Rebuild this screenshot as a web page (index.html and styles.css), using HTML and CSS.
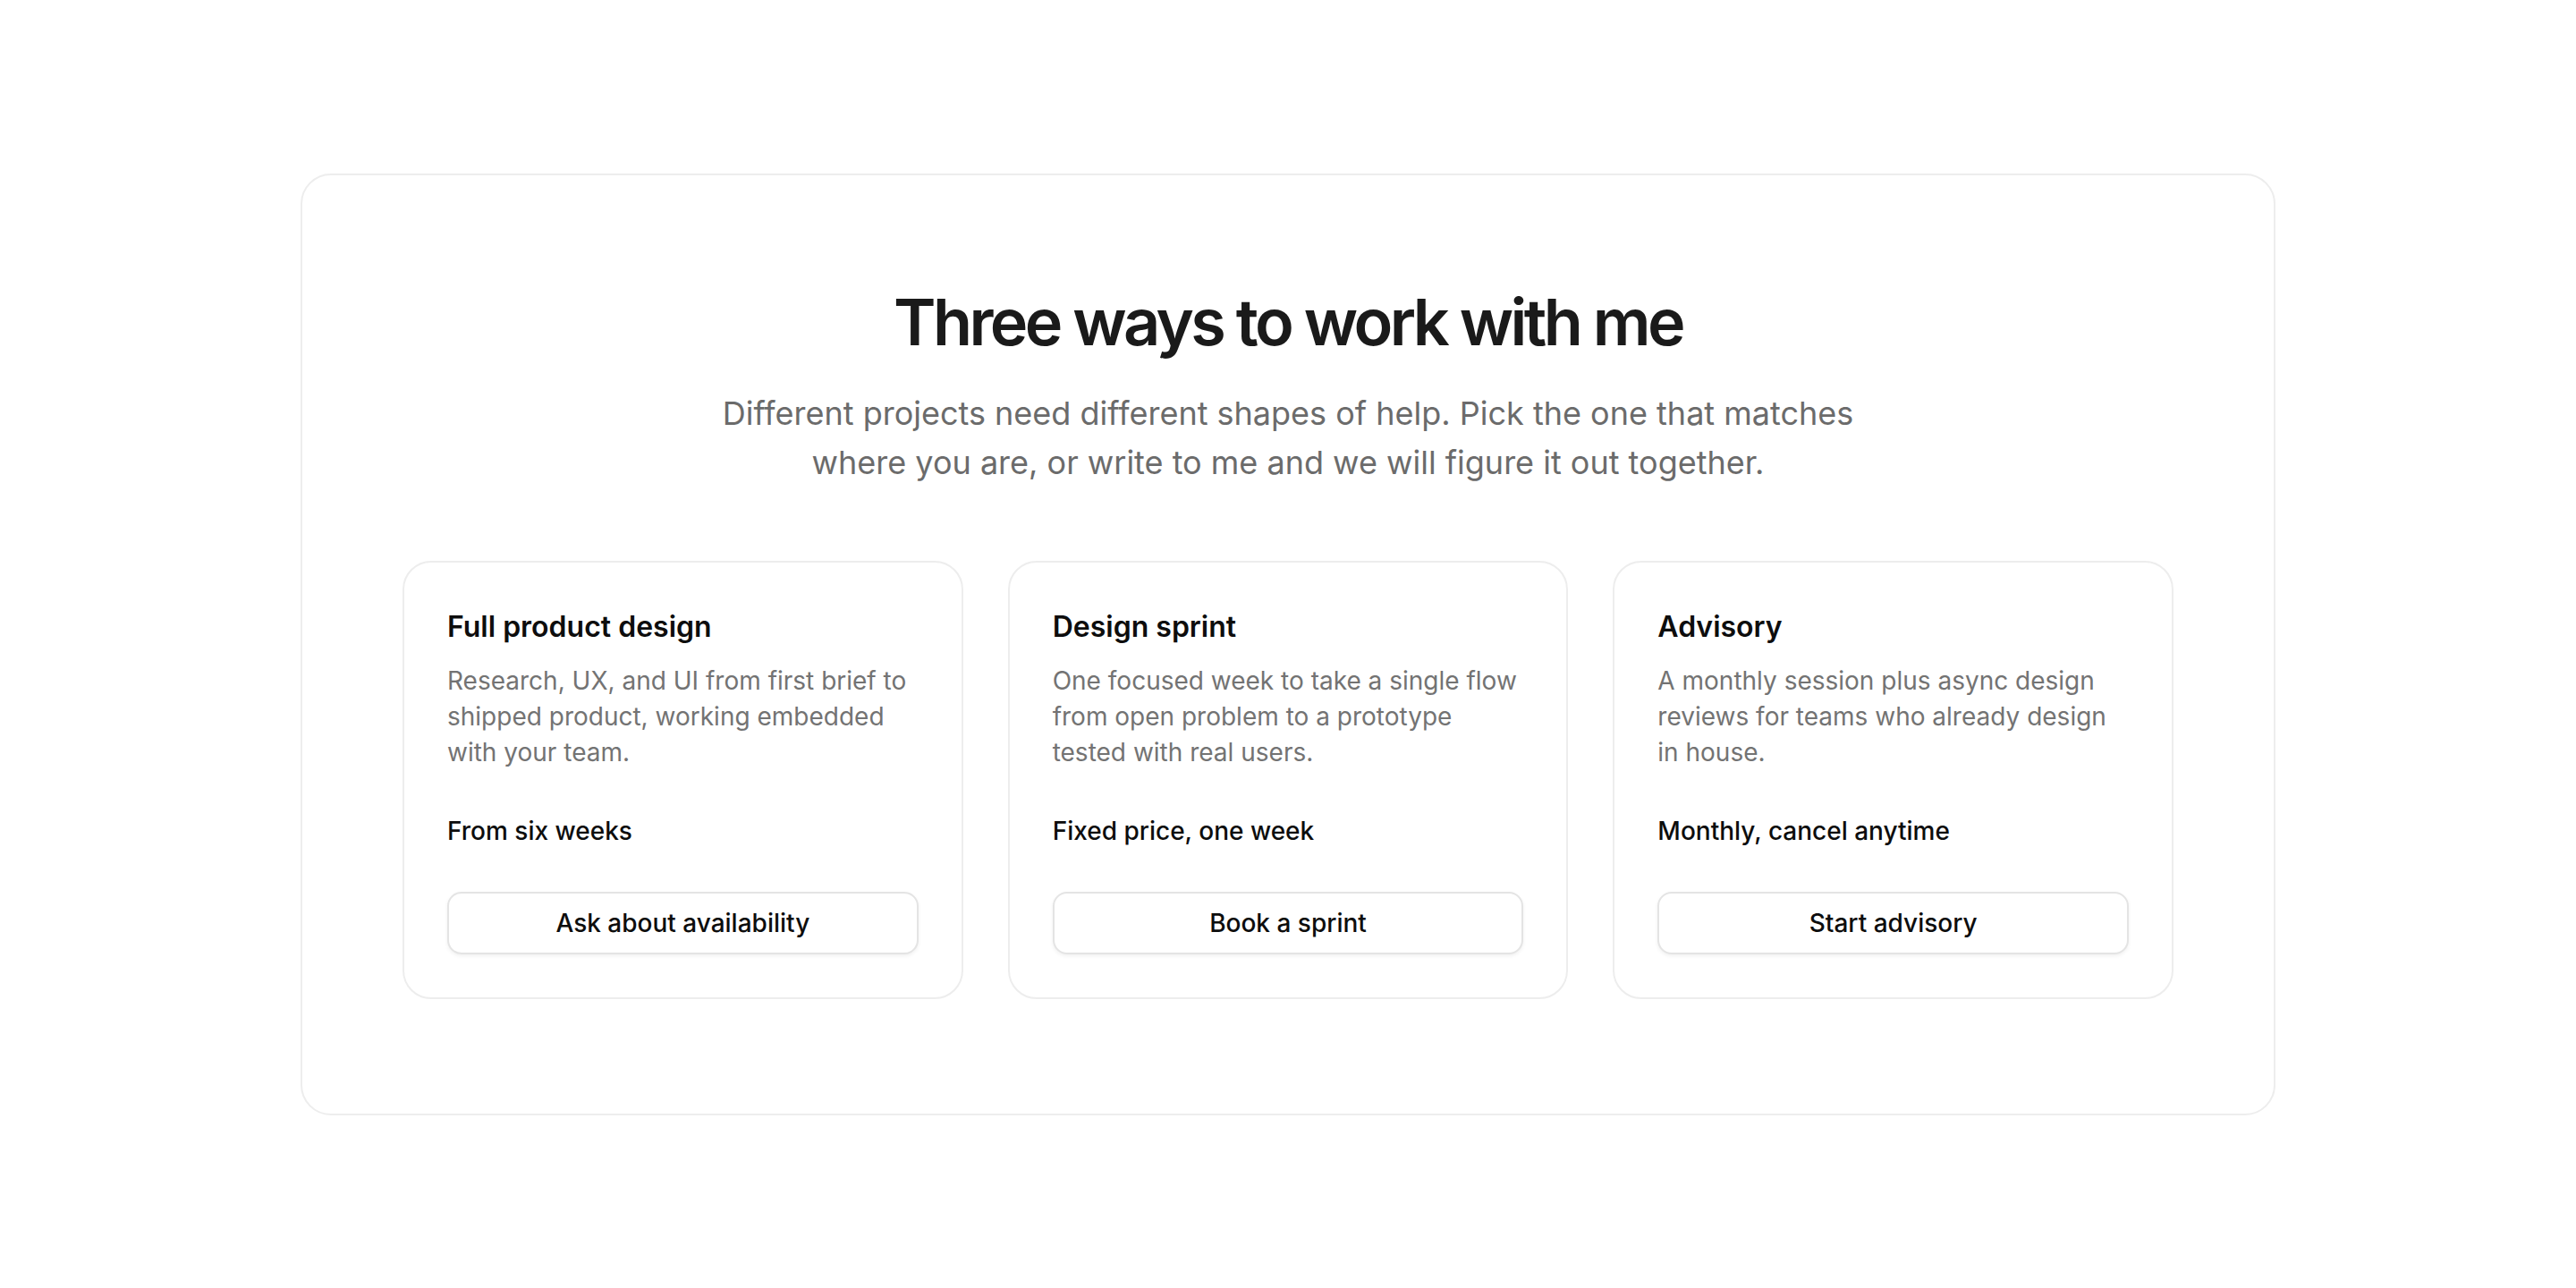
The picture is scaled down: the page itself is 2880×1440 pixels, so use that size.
FILE: index.html
```html
<!DOCTYPE html>
<html lang="en">
<head>
<meta charset="utf-8">
<title>Work with me</title>
<link rel="stylesheet" href="styles.css">
</head>
<body>
  <main class="page">
    <section class="offer">
      <header class="offer-head">
        <h1 class="offer-title">Three ways to work with me</h1>
        <p class="offer-lead">Different projects need different shapes of help. Pick the one that matches where you are, or write to me and we will figure it out together.</p>
      </header>
      <div class="plans">
        <article class="plan">
          <h2 class="plan-name">Full product design</h2>
          <p class="plan-desc">Research, UX, and UI from first brief to shipped product, working embedded with your team.</p>
          <p class="plan-term">From six weeks</p>
          <button class="plan-btn" type="button">Ask about availability</button>
        </article>
        <article class="plan">
          <h2 class="plan-name">Design sprint</h2>
          <p class="plan-desc">One focused week to take a single flow from open problem to a prototype tested with real users.</p>
          <p class="plan-term">Fixed price, one week</p>
          <button class="plan-btn" type="button">Book a sprint</button>
        </article>
        <article class="plan">
          <h2 class="plan-name">Advisory</h2>
          <p class="plan-desc">A monthly session plus async design reviews for teams who already design in house.</p>
          <p class="plan-term">Monthly, cancel anytime</p>
          <button class="plan-btn" type="button">Start advisory</button>
        </article>
      </div>
    </section>
  </main>
</body>
</html>
```
FILE: styles.css
```css
* {
  box-sizing: border-box;
}

html, body {
  margin: 0;
  padding: 0;
  background: #ffffff;
}

body {
  font-family: Inter, "Noto Sans", "Liberation Sans", sans-serif;
  color: #111111;
  -webkit-font-smoothing: antialiased;
}

.page {
  min-height: 100vh;
  display: flex;
  align-items: center;
  justify-content: center;
}

.offer {
  width: 2208px;
  border: 2px solid #ededed;
  border-radius: 34px;
  padding: 124px 112px 128px;
  background: #ffffff;
}

.offer-head {
  display: flex;
  flex-direction: column;
  align-items: center;
  text-align: center;
}

.offer-title {
  margin: 0;
  font-size: 72px;
  line-height: 80px;
  font-weight: 600;
  letter-spacing: -0.05em;
  color: #1a1a1a;
}

.offer-lead {
  margin: 35px 0 0;
  max-width: 1300px;
  font-size: 36px;
  line-height: 55px;
  font-weight: 400;
  color: #6b6b6b;
}

.plans {
  margin-top: 82px;
  display: grid;
  grid-template-columns: repeat(3, 1fr);
  gap: 50px;
}

.plan {
  display: flex;
  flex-direction: column;
  border: 2px solid #ededed;
  border-radius: 32px;
  padding: 48px;
  background: #ffffff;
}

.plan-name {
  margin: 0;
  font-size: 32px;
  line-height: 48px;
  font-weight: 600;
  color: #0d0d0d;
}

.plan-desc {
  margin: 16px 0 0;
  font-size: 28px;
  line-height: 40px;
  color: #737373;
}

.plan-term {
  margin: 48px 0 0;
  font-size: 28px;
  line-height: 40px;
  font-weight: 500;
  color: #0d0d0d;
}

.plan-btn {
  margin-top: 48px;
  height: 70px;
  width: 100%;
  border: 2px solid #e4e4e4;
  border-radius: 16px;
  background: #ffffff;
  box-shadow: 0 2px 4px rgba(0, 0, 0, 0.06);
  font-family: inherit;
  font-size: 28px;
  font-weight: 500;
  color: #0d0d0d;
  cursor: pointer;
}
```
